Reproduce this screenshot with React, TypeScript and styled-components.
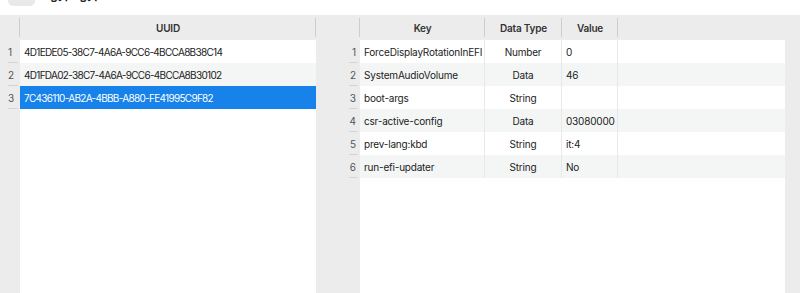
import React from "react";
import styled, { createGlobalStyle } from "styled-components";

const Global = createGlobalStyle`
  html, body { margin: 0; padding: 0; background: #ffffff; }
  body { font-family: Inter, "Open Sans", "Liberation Sans", sans-serif; color: #222; overflow: hidden; }
  * { box-sizing: border-box; }
`;

const Page = styled.div`
  width: 800px;
  height: 293px;
  display: flex;
  flex-direction: column;
  overflow: hidden;
`;

const Toolbar = styled.div`
  height: 22px;
  margin-top: -16px;
  margin-bottom: 9px;
  padding-left: 8px;
  display: flex;
  align-items: center;
  gap: 8px;
  flex: none;
`;

const ToolButton = styled.div`
  width: 27px;
  height: 22px;
  border-radius: 5px;
  background: #e9e9e9;
`;

const ToolLabel = styled.span`
  font-size: 12px;
  font-weight: 600;
  color: #222;
  line-height: 22px;
`;

const Main = styled.div`
  flex: 1;
  display: flex;
  background: #ececec;
  padding-left: 4px;
  min-height: 0;
`;

const Panel = styled.div<{ $width?: number }>`
  display: flex;
  flex-direction: column;
  ${(p) => (p.$width ? `width: ${p.$width}px; flex: none;` : `flex: 1;`)}
`;

const HeaderRow = styled.div`
  height: 25px;
  display: flex;
  flex: none;
  background: #ececec;
`;

const HeaderCell = styled.div<{ $width?: number; $divider?: boolean }>`
  position: relative;
  ${(p) => (p.$width ? `width: ${p.$width}px; flex: none;` : `flex: 1;`)}
  display: flex;
  align-items: center;
  justify-content: center;
  font-size: 10px;
  font-weight: 600;
  letter-spacing: -0.2px;
  color: #333;
  &::after {
    content: "";
    display: ${(p) => (p.$divider ? "block" : "none")};
    position: absolute;
    right: 0;
    top: 3px;
    bottom: 3px;
    width: 1px;
    background: #cdcdcd;
  }
`;

const Body = styled.div`
  flex: 1;
  display: flex;
  min-height: 0;
`;

const NumberColumn = styled.div<{ $width: number }>`
  width: ${(p) => p.$width}px;
  flex: none;
  display: flex;
  flex-direction: column;
  background: #ececec;
`;

const NumberCell = styled.div<{ $align: "left" | "right"; $lineFrom: number }>`
  position: relative;
  height: 23px;
  display: flex;
  align-items: center;
  justify-content: ${(p) => (p.$align === "left" ? "flex-start" : "flex-end")};
  padding: ${(p) => (p.$align === "left" ? "0 0 0 4px" : "0 4px 0 0")};
  font-size: 10px;
  color: #555;
  &::after {
    content: "";
    position: absolute;
    left: ${(p) => p.$lineFrom}px;
    right: 2px;
    bottom: 0;
    height: 1px;
    background: #d3d3d3;
  }
`;

const DataArea = styled.div<{ $width: number }>`
  width: ${(p) => p.$width}px;
  flex: none;
  background: #ffffff;
  display: flex;
  flex-direction: column;
`;

const DataRow = styled.div<{ $alt?: boolean; $selected?: boolean }>`
  height: 23px;
  display: flex;
  background: ${(p) => (p.$selected ? "#1682ea" : p.$alt ? "#f4f5f5" : "#ffffff")};
  color: ${(p) => (p.$selected ? "#ffffff" : "#222")};
`;

const Cell = styled.div<{ $width: number; $align?: "left" | "center" }>`
  width: ${(p) => p.$width}px;
  flex: none;
  display: flex;
  align-items: center;
  justify-content: ${(p) => (p.$align === "center" ? "center" : "flex-start")};
  padding: 0 4px;
  font-size: 10px;
  letter-spacing: -0.2px;
  white-space: nowrap;
  overflow: hidden;
  border-right: 1px solid #e8e8e8;
`;

const UuidCell = styled.div`
  flex: 1;
  display: flex;
  align-items: center;
  padding-left: 4px;
  font-size: 10px;
  letter-spacing: -0.7px;
  white-space: nowrap;
`;

const uuids = [
  "4D1EDE05-38C7-4A6A-9CC6-4BCCA8B38C14",
  "4D1FDA02-38C7-4A6A-9CC6-4BCCA8B30102",
  "7C436110-AB2A-4BBB-A880-FE41995C9F82",
];

const rows = [
  { key: "ForceDisplayRotationInEFI", type: "Number", value: "0" },
  { key: "SystemAudioVolume", type: "Data", value: "46" },
  { key: "boot-args", type: "String", value: "" },
  { key: "csr-active-config", type: "Data", value: "03080000" },
  { key: "prev-lang:kbd", type: "String", value: "it:4" },
  { key: "run-efi-updater", type: "String", value: "No" },
];

export default function App() {
  return (
    <Page>
      <Global />
      <Toolbar>
        <ToolButton />
        <ToolLabel>Egypt gyp</ToolLabel>
      </Toolbar>
      <Main>
        <Panel $width={312}>
          <HeaderRow>
            <HeaderCell $width={16} $divider />
            <HeaderCell $width={296} $divider>UUID</HeaderCell>
          </HeaderRow>
          <Body>
            <NumberColumn $width={16}>
              {uuids.map((_, i) => (
                <NumberCell key={i} $align="left" $lineFrom={4}>
                  {i + 1}
                </NumberCell>
              ))}
            </NumberColumn>
            <DataArea $width={296}>
              {uuids.map((u, i) => (
                <DataRow key={u} $alt={i === 1} $selected={i === 2}>
                  <UuidCell>{u}</UuidCell>
                </DataRow>
              ))}
            </DataArea>
          </Body>
        </Panel>
        <Panel>
          <HeaderRow>
            <HeaderCell $width={44} $divider />
            <HeaderCell $width={125} $divider>Key</HeaderCell>
            <HeaderCell $width={77} $divider>Data Type</HeaderCell>
            <HeaderCell $width={56} $divider>Value</HeaderCell>
            <HeaderCell />
          </HeaderRow>
          <Body>
            <NumberColumn $width={44}>
              {rows.map((_, i) => (
                <NumberCell key={i} $align="right" $lineFrom={33}>
                  {i + 1}
                </NumberCell>
              ))}
            </NumberColumn>
            <DataArea $width={425}>
              {rows.map((r, i) => (
                <DataRow key={r.key} $alt={i % 2 === 1}>
                  <Cell $width={125}>{r.key}</Cell>
                  <Cell $width={77} $align="center">{r.type}</Cell>
                  <Cell $width={56}>{r.value}</Cell>
                </DataRow>
              ))}
            </DataArea>
          </Body>
        </Panel>
      </Main>
    </Page>
  );
}
